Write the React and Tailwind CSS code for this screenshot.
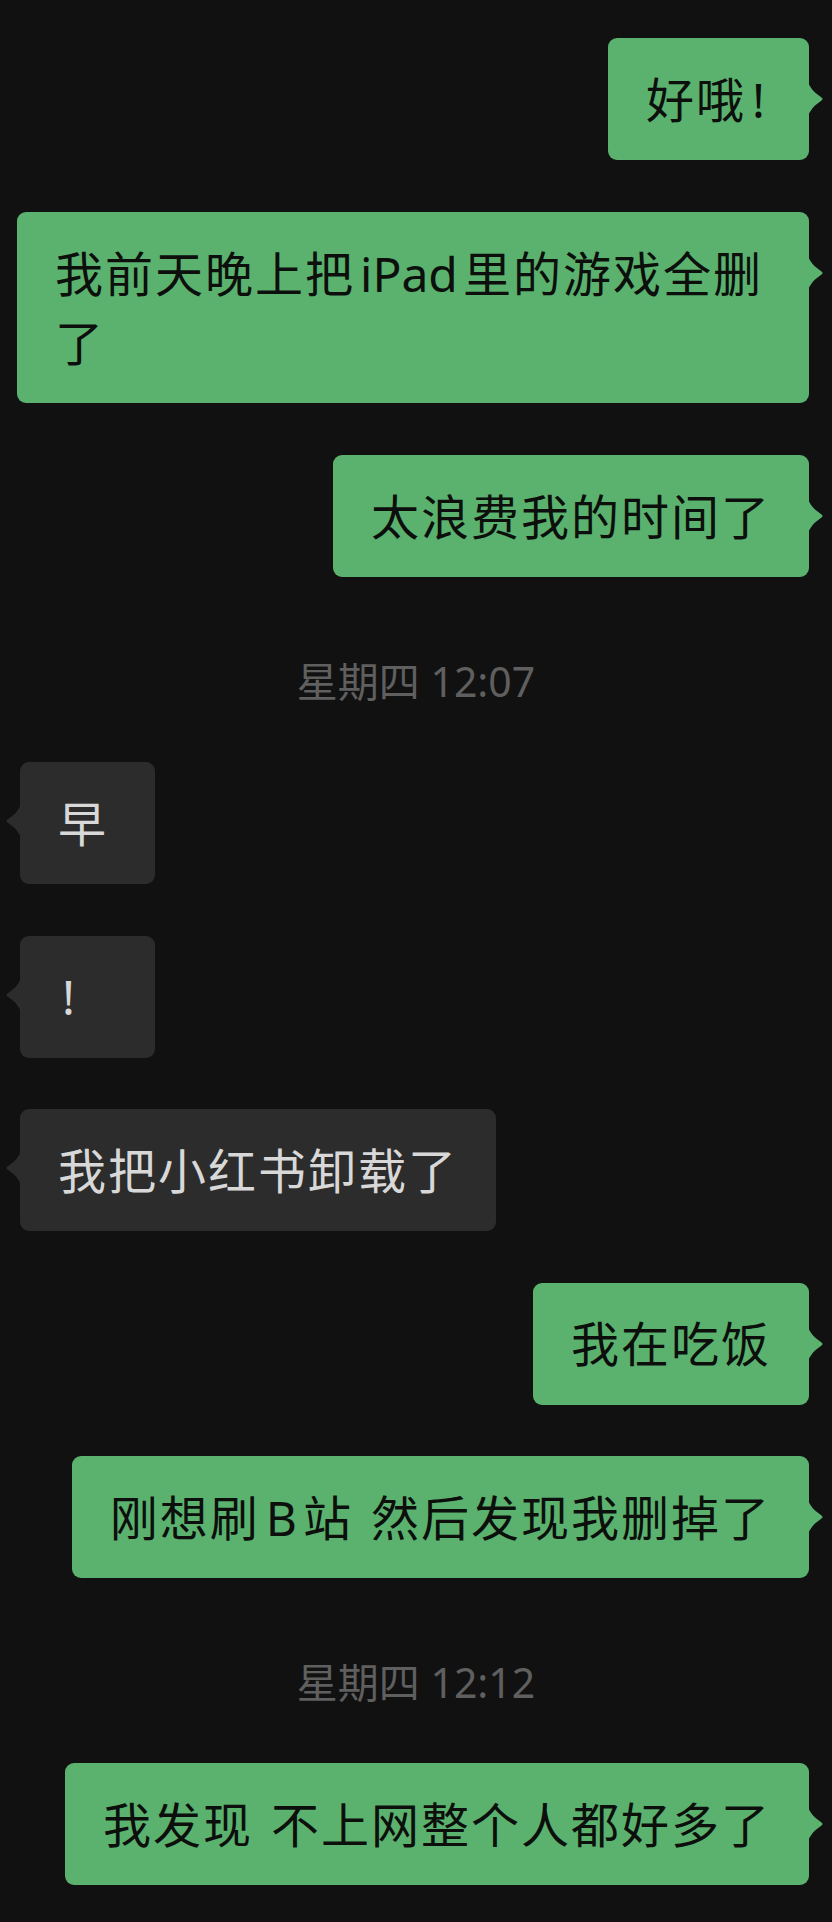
import React from 'react';

const GREEN = '#5bb26f';
const GREY = '#2c2c2c';

function Tail({ side, color }) {
  // little pointer on the bubble edge
  if (side === 'right') {
    return (
      <svg
        className="absolute top-[44px] right-[-15px]"
        width="16"
        height="34"
        viewBox="0 0 16 34"
      >
        <path
          d="M0 0 C1.5 4 4 7.5 7 10.5 L13.5 15.5 Q15.6 17 13.5 18.5 L7 23.5 C4 26.5 1.5 30 0 34 Z"
          fill={color}
        />
      </svg>
    );
  }
  return (
    <svg
      className="absolute top-[42px] left-[-15px]"
      width="16"
      height="34"
      viewBox="0 0 16 34"
    >
      <path
        d="M16 0 C14.5 4 12 7.5 9 10.5 L2.5 15.5 Q0.4 17 2.5 18.5 L9 23.5 C12 26.5 14.5 30 16 34 Z"
        fill={color}
      />
    </svg>
  );
}

function Mine({ children, className = '' }) {
  return (
    <div className={`flex justify-end pr-[23px] pl-[17px] ${className}`}>
      <div className="relative max-w-[792px] rounded-[9px] bg-[#5bb26f] px-[38px] py-[26.5px] text-[48px] leading-[69px] tracking-[2px] text-[#0c0f0c]">
        {children}
        <Tail side="right" color={GREEN} />
      </div>
    </div>
  );
}

function Theirs({ children, className = '' }) {
  return (
    <div className={`flex justify-start pl-[20px] pr-[23px] ${className}`}>
      <div className="relative min-w-[135px] rounded-[9px] bg-[#2c2c2c] px-[38px] py-[26.5px] text-[48px] leading-[69px] tracking-[2px] text-[#d8d8d8]">
        {children}
        <Tail side="left" color={GREY} />
      </div>
    </div>
  );
}

function Stamp({ children, className = '' }) {
  return (
    <div className={`h-[50px] text-center text-[41px] leading-[50px] text-[#5f5f5f] ${className}`}>
      {children}
    </div>
  );
}

function Gap() {
  return <span className="inline-block w-[18px]" />;
}

export default function App() {
  return (
    <div
      className="min-h-[1922px] w-[832px] bg-[#111111] pt-[38px]"
      style={{ fontFamily: '"Noto Sans", "Noto Sans CJK SC", sans-serif' }}
    >
      <Mine>
        好哦<span className="inline-block w-[25px] text-center tracking-normal">!</span>
      </Mine>
      <Mine className="mt-[52px]">
        我前天晚上把<span className="mx-[5px] tracking-normal">iPad</span>里的游戏全删了
      </Mine>
      <Mine className="mt-[52px]">太浪费我的时间了</Mine>

      <Stamp className="mt-[79px]">星期四 12:07</Stamp>

      <Theirs className="mt-[56px]">早</Theirs>
      <Theirs className="mt-[51.5px]">
        <span className="ml-[4px] tracking-normal">!</span>
      </Theirs>
      <Theirs className="mt-[51.5px]">我把小红书卸载了</Theirs>
      <Mine className="mt-[51.5px]">我在吃饭</Mine>
      <Mine className="mt-[51.5px]">
        刚想刷<span className="mx-[6px] tracking-normal">B</span>站<Gap />然后发现我删掉了
      </Mine>

      <Stamp className="mt-[79px]">星期四 12:12</Stamp>

      <Mine className="mt-[56px]">
        我发现<Gap />不上网整个人都好多了
      </Mine>
    </div>
  );
}
